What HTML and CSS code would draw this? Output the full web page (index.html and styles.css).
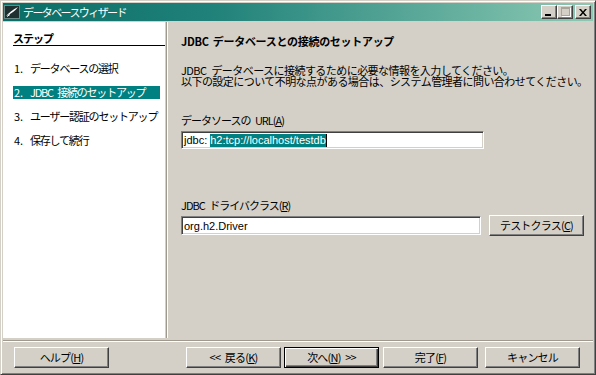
FILE: index.html
```html
<!DOCTYPE html>
<html lang="ja">
<head>
<meta charset="utf-8">
<link rel="stylesheet" href="styles.css">
</head>
<body>
<div class="window">
  <div class="titlebar">
    <svg class="app-icon" width="16" height="16" viewBox="0 0 16 16">
      <rect x="0.5" y="1.5" width="15" height="13" fill="#1e3030" stroke="#6a8a88"/>
      <path d="M2 12 C5 9 8 6 14 3 C11 7 8 9 4 11 Z" fill="#ffffff"/>
      <path d="M3 12.5 L6 10.5" stroke="#ffffff" stroke-width="1"/>
    </svg>
    <span class="title">データベースウィザード</span>
    <div class="tb-buttons">
      <span class="tb-btn tb-min"><span class="min-bar"></span></span>
      <span class="tb-btn tb-max"><span class="max-box"></span></span>
      <span class="tb-btn tb-close">
        <svg width="8" height="7" viewBox="0 0 8 7"><path d="M0 0h2l2 2.5L6 0h2L5 3.5 8 7H6L4 4.5 2 7H0l3-3.5z" fill="#000"/></svg>
      </span>
    </div>
  </div>
  <div class="main">
    <div class="steps">
      <div class="steps-head">ステップ</div>
      <ol class="step-list">
        <li><span class="num">1.</span>データベースの選択</li>
        <li class="current"><span class="num">2.</span>JDBC 接続のセットアップ</li>
        <li><span class="num">3.</span>ユーザー認証のセットアップ</li>
        <li><span class="num">4.</span>保存して続行</li>
      </ol>
    </div>
    <div class="panel">
      <h1 class="panel-title">JDBC データベースとの接続のセットアップ</h1>
      <p class="desc"><span class="line">JDBC データベースに接続するために必要な情報を入力してください。</span><span class="line">以下の設定について不明な点がある場合は、システム管理者に問い合わせてください。</span></p>
      <div class="field-label url-label">データソースの URL(<u>A</u>)</div>
      <div class="input url-input"><span class="prefix">jdbc:</span><span class="sel">h2:tcp://localhost/testdb</span><span class="caret"></span></div>
      <div class="field-label driver-label">JDBC ドライバクラス(<u>R</u>)</div>
      <div class="driver-row">
        <div class="input driver-input">org.h2.Driver</div>
        <button class="btn test-btn">テストクラス(<u>C</u>)</button>
      </div>
    </div>
  </div>
  <div class="footer">
    <button class="btn help-btn">ヘルプ(<u>H</u>)</button>
    <button class="btn back-btn">&lt;&lt; 戻る(<u>K</u>)</button>
    <button class="btn next-btn default">次へ(<u>N</u>) &gt;&gt;</button>
    <button class="btn finish-btn">完了(<u>F</u>)</button>
    <button class="btn cancel-btn">キャンセル</button>
  </div>
</div>
</body>
</html>
```
FILE: styles.css
```css
html, body {
  margin: 0;
  padding: 0;
  background: #d4d0c8;
}
body {
  font-family: "Noto Sans CJK JP", "Liberation Sans", sans-serif;
  font-size: 11px;
  color: #000;
}
.window {
  width: 596px;
  height: 375px;
  box-sizing: border-box;
  border: 1px solid;
  border-color: #d4d0c8 #404040 #404040 #d4d0c8;
  box-shadow: inset 1px 1px #ffffff, inset -1px -1px #808080;
  padding: 2px;
  background: #d4d0c8;
  display: flex;
  flex-direction: column;
}
.titlebar {
  height: 18px;
  flex: none;
  display: flex;
  align-items: center;
  background: linear-gradient(to right, #0a6d66 0%, #1f8179 35%, #8cc9b3 100%);
  color: #fff;
  padding-left: 1px;
}
.app-icon {
  flex: none;
  margin-right: 3px;
}
.title {
  font-size: 11px;
  letter-spacing: -1.6px;
  line-height: 18px;
}
.tb-buttons {
  margin-left: auto;
  display: flex;
  align-items: center;
  padding-right: 2px;
}
.tb-btn {
  width: 16px;
  height: 14px;
  box-sizing: border-box;
  background: #d4d0c8;
  border: 1px solid;
  border-color: #ffffff #404040 #404040 #ffffff;
  box-shadow: inset -1px -1px #808080;
  display: flex;
  align-items: center;
  justify-content: center;
  position: relative;
}
.tb-close {
  margin-left: 2px;
}
.min-bar {
  position: absolute;
  left: 3px;
  bottom: 2px;
  width: 6px;
  height: 2px;
  background: #000;
}
.max-box {
  width: 7px;
  height: 6px;
  border: 1px solid #a8a49a;
  border-top-width: 2px;
  box-shadow: 1px 1px #ffffff;
  margin-top: -1px;
}
.main {
  flex: 1;
  display: flex;
  padding-top: 1px;
  min-height: 0;
}
.steps {
  width: 162px;
  flex: none;
  background: #ffffff;
  margin-bottom: 1px;
  border-right: 1px solid #d4d0c8;
  box-shadow: 1px 0 #a09a8e, 2px 0 #ffffff;
}
.steps-head {
  margin: 9px 0 0 10px;
  height: 14px;
  line-height: 14px;
  font-weight: bold;
  font-size: 11px;
  letter-spacing: -1px;
  border-bottom: 1px solid #000;
}
.step-list {
  list-style: none;
  margin: 16px 0 0 10px;
  padding: 0;
}
.step-list li {
  width: 147px;
  height: 13px;
  line-height: 13px;
  margin-bottom: 11px;
  white-space: nowrap;
  letter-spacing: -1.2px;
  word-spacing: 3px;
  display: flex;
}
.step-list li .num {
  width: 16px;
  flex: none;
  padding-left: 1px;
  letter-spacing: 0;
}
.step-list li.current {
  background: #008080;
  color: #ffffff;
}
.panel {
  flex: 1;
  padding-left: 15px;
  padding-right: 8px;
}
.panel-title {
  margin: 12px 0 0 0;
  font-size: 11px;
  font-weight: bold;
  line-height: 14px;
  letter-spacing: -0.3px;
  word-spacing: 2px;
}
.desc {
  margin: 17px 0 0 0;
  white-space: nowrap;
  letter-spacing: -0.55px;
  word-spacing: 3px;
}
.desc .line {
  display: block;
  height: 11px;
  line-height: 11px;
  font-size: 11px;
}
.field-label {
  line-height: 14px;
  letter-spacing: -1px;
  word-spacing: 3px;
}
.url-label {
  margin-top: 26px;
}
.input {
  box-sizing: border-box;
  background: #ffffff;
  border: 1px solid;
  border-color: #808080 #ffffff #ffffff #808080;
  box-shadow: inset 1px 1px #404040, inset -1px -1px #d4d0c8;
  padding: 0 2px;
  white-space: nowrap;
  display: flex;
  align-items: center;
  font-family: "Liberation Sans", "Noto Sans CJK JP", sans-serif;
  font-size: 11px;
}
.url-input {
  width: 303px;
  height: 18px;
  margin-top: 4px;
}
.url-input .prefix {
  margin-right: 3px;
}
.url-input .sel {
  background: #008080;
  color: #ffffff;
  line-height: 13px;
}
.caret {
  width: 1px;
  height: 13px;
  background: #000;
}
.driver-label {
  margin-top: 49px;
}
.driver-row {
  display: flex;
  align-items: center;
  margin-top: 3px;
}
.driver-input {
  width: 300px;
  height: 19px;
}
.btn {
  font-family: "Noto Sans CJK JP", "Liberation Sans", sans-serif;
  font-size: 11px;
  letter-spacing: -0.8px;
  word-spacing: 3px;
  color: #000;
  background: #d4d0c8;
  box-sizing: border-box;
  width: 95px;
  height: 21px;
  padding: 0;
  border: 1px solid;
  border-color: #ffffff #404040 #404040 #ffffff;
  box-shadow: inset -1px -1px #808080, inset 1px 1px #d4d0c8;
  line-height: 17px;
}
.btn u {
  text-decoration: underline;
}
.test-btn {
  margin-left: 8px;
}
.footer {
  flex: none;
  height: 32px;
  border-top: 1px solid #a09a8e;
  box-shadow: inset 0 1px #ffffff;
  display: flex;
  align-items: flex-start;
  padding-top: 6px;
  box-sizing: border-box;
  margin-top: 1px;
}
.help-btn {
  margin-left: 11px;
}
.back-btn {
  margin-left: 77px;
}
.next-btn {
  margin-left: 3px;
}
.btn.default {
  border: 1px solid #000;
  box-shadow: inset 1px 1px #ffffff, inset -1px -1px #404040, inset -2px -2px #808080;
}
.finish-btn {
  margin-left: 4px;
}
.cancel-btn {
  margin-left: 7px;
}
```
